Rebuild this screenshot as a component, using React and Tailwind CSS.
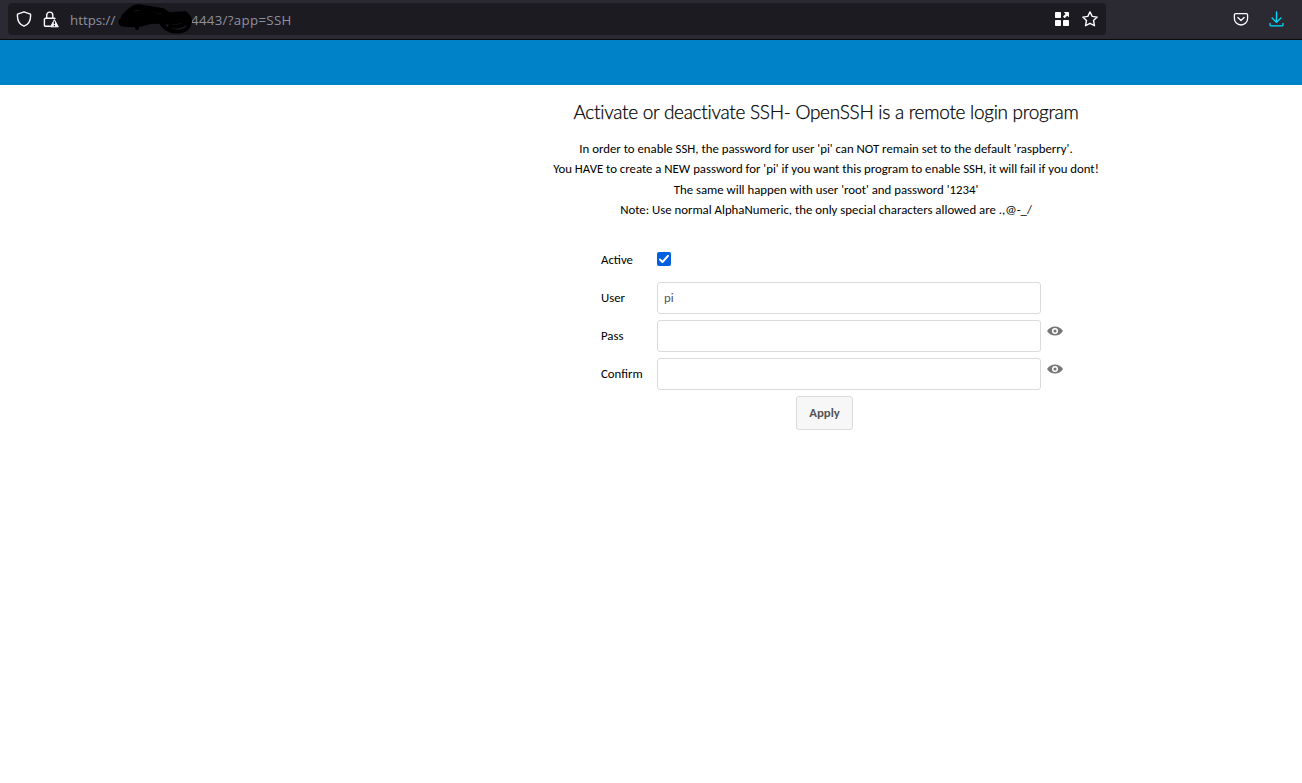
import React from "react";

function Shield() {
  return (
    <svg width="16" height="16" viewBox="0 0 16 16" fill="none" stroke="#fbfbfe" strokeWidth="1.4" strokeLinejoin="round">
      <path d="M8 .8 14.500 3.200c.5 5.600-1.200 9.900-6.500 12C2.700 13.100 1 8.800 1.500 3.200z" />
    </svg>
  );
}

function Lock() {
  return (
    <svg width="17" height="17" viewBox="0 0 17 17" fill="none">
      <path d="M3.700 7.300V4.200a3 3 0 0 1 6.100 0v3.100M7.500 15.300H2.600a1.200 1.200 0 0 1-1.200-1.200V8.500a1.200 1.200 0 0 1 1.200-1.200h8.500a1.200 1.200 0 0 1 1.100.8" stroke="#fbfbfe" strokeWidth="1.400" />
      <path d="M11.400 8.700 15.300 15.800H7.500z" fill="#fbfbfe" stroke="#fbfbfe" strokeLinejoin="round" />
      <path d="M11.400 10.200v3M11.400 14v1.300" stroke="#1c1b22" strokeWidth="1.200" />
    </svg>
  );
}

function Scribble() {
  return (
    <svg className="absolute top-[3px] left-[115px]" width="80" height="32" viewBox="0 0 80 32" fill="none" stroke="#000" strokeLinecap="round" strokeLinejoin="round">
      <path d="M8 19C15 20 25 20 33 17S52 20 70 15" strokeWidth="9" />
      <path d="M9 14Q17 4 23 4L31 5 48 8 54 12 70 11" strokeWidth="5.500" />
      <path d="M14 14 30 11 43 15 58 16" strokeWidth="9" />
      <path d="M22 18V25M45 18Q50 28 61 28.500T74 22Q77 16 71 11M55 23Q65 25 71 20" strokeWidth="4" />
    </svg>
  );
}

function Apps() {
  return (
    <svg width="14" height="14" viewBox="0 0 14 14">
      <g fill="#fbfbfe">
        <rect width="6" height="6" rx=".8" />
        <rect y="8" width="6" height="6" rx=".8" />
        <rect x="8" y="8" width="6" height="6" rx=".8" />
        <path d="M8.800 0h4.400a.8.800 0 0 1 .8.800v4.400L12.200 3.700 9.600 6.200 8 4.600 10.500 2z" />
      </g>
    </svg>
  );
}

function Star() {
  return (
    <svg width="16" height="16" viewBox="0 0 16 16" fill="none" stroke="#fbfbfe" strokeWidth="1.400" strokeLinejoin="round">
      <path d="m8 .9 2.200 4.500 5 .7-3.700 3.400 1 5.200L8 12.300l-4.500 2.400 1-5.200L.8 6.100l5-.7z" />
    </svg>
  );
}

function Pocket() {
  return (
    <svg width="16" height="16" viewBox="0 0 16 16" fill="none" stroke="#fbfbfe" strokeWidth="1.300" strokeLinecap="round" strokeLinejoin="round">
      <path d="M2.600 2.700h10.800a1.200 1.200 0 0 1 1.200 1.200v3.500a6.600 6.600 0 0 1-13.200 0V3.900a1.200 1.200 0 0 1 1.200-1.200z" />
      <path d="m4.900 6.500 3.100 3 3.100-3" />
    </svg>
  );
}

function Download() {
  return (
    <svg width="16" height="16" viewBox="0 0 16 16" fill="none" stroke="#00ddff" strokeWidth="1.300" strokeLinecap="round" strokeLinejoin="round">
      <path d="M7.500 .8v10.500M3.100 7l4.400 4.400L11.900 7M1 12.500v1.300a1 1 0 0 0 1 1h11a1 1 0 0 0 1-1v-1.300" />
    </svg>
  );
}

function Eye() {
  return (
    <svg className="mt-[6.500px] ml-1.5 shrink-0" width="16" height="10" viewBox="0 0 16 10">
      <path d="M0 5Q3 .5 8 .5T16 5Q13 9.500 8 9.500T0 5z" fill="#777" />
      <circle cx="8" cy="5" r="2.300" fill="none" stroke="#fff" strokeWidth="1.500" />
    </svg>
  );
}

function Field({ label, type = "text", value, eye }) {
  return (
    <label className="flex h-8">
      <span className="w-14 shrink-0 pt-[7px] leading-[18px]">{label}</span>
      <input
        type={type}
        defaultValue={value}
        className="h-8 w-96 shrink-0 rounded-[3px] border border-[#dbdbdb] bg-white px-1.5 text-[#555] outline-none"
      />
      {eye && <Eye />}
    </label>
  );
}

export default function App() {
  return (
    <div className="flex h-screen flex-col overflow-hidden bg-white font-['Carlito','Lato',sans-serif] text-[12.800px] text-black">
      <header className="flex h-10 shrink-0 items-start border-b border-[#0c0c0d] bg-[#2b2a33] pt-[3px] pl-2">
        <div className="flex h-8 w-[1098px] items-center rounded-[4px] bg-[#1c1b22] pl-2">
          <Shield />
          <span className="ml-[11px]"><Lock /></span>
          <div className="ml-[10px] flex items-center pt-[3px] font-['Open_Sans',sans-serif] text-[13.300px] text-[#8f8f9d]">
            <span className="w-[121px]">https://</span>
            <span className="tracking-[0.300px]">4443/?app=SSH</span>
          </div>
          <div className="mr-2 ml-auto flex items-center gap-[13px]">
            <Apps />
            <Star />
          </div>
        </div>
        <div className="mr-[17px] ml-auto flex h-8 items-center gap-5">
          <Pocket />
          <Download />
        </div>
        <Scribble />
      </header>
      <div className="h-[45px] shrink-0 bg-[#0082c9]" />
      <main className="ml-[350px] flex flex-col items-center pt-[14px]">
        <h1 className="font-['Lato',sans-serif] text-[19px] leading-[26px] font-light tracking-[-0.290px] whitespace-nowrap [-webkit-text-stroke:0.25px_black]">Activate or deactivate SSH- OpenSSH is a remote login program</h1>
        <div className="mt-[14px] flex flex-col items-center leading-[20.400px] whitespace-nowrap">
          <p>In order to enable SSH, the password for user 'pi' can NOT remain set to the default 'raspberry'.</p>
          <p>You HAVE to create a NEW password for 'pi' if you want this program to enable SSH, it will fail if you dont!</p>
          <p>The same will happen with user 'root' and password '1234'</p>
          <p>Note: Use normal AlphaNumeric, the only special characters allowed are .,@-_/</p>
        </div>
        <form className="mt-[30px] flex w-[450px] flex-col">
          <label className="flex h-[31px]">
            <span className="w-14 leading-[18px]">Active</span>
            <span className="mt-px flex size-3.5 items-center justify-center rounded-[2px] bg-[#0060df]">
              <svg width="12" height="12" viewBox="0 0 12 12" fill="none" stroke="#fff" strokeWidth="2" strokeLinecap="round" strokeLinejoin="round">
                <path d="m2 6.500 2.500 2.500L10 2.800" />
              </svg>
            </span>
          </label>
          <div className="flex flex-col gap-1.5">
            <Field label="User" value="pi" />
            <Field label="Pass" type="password" eye />
            <Field label="Confirm" type="password" eye />
          </div>
          <button type="button" className="mt-1.5 ml-[195px] h-[34px] w-[57px] rounded-[3px] border border-[#dbdbdb] bg-[#f7f7f7] font-bold text-[#555]">
            Apply
          </button>
        </form>
      </main>
    </div>
  );
}
